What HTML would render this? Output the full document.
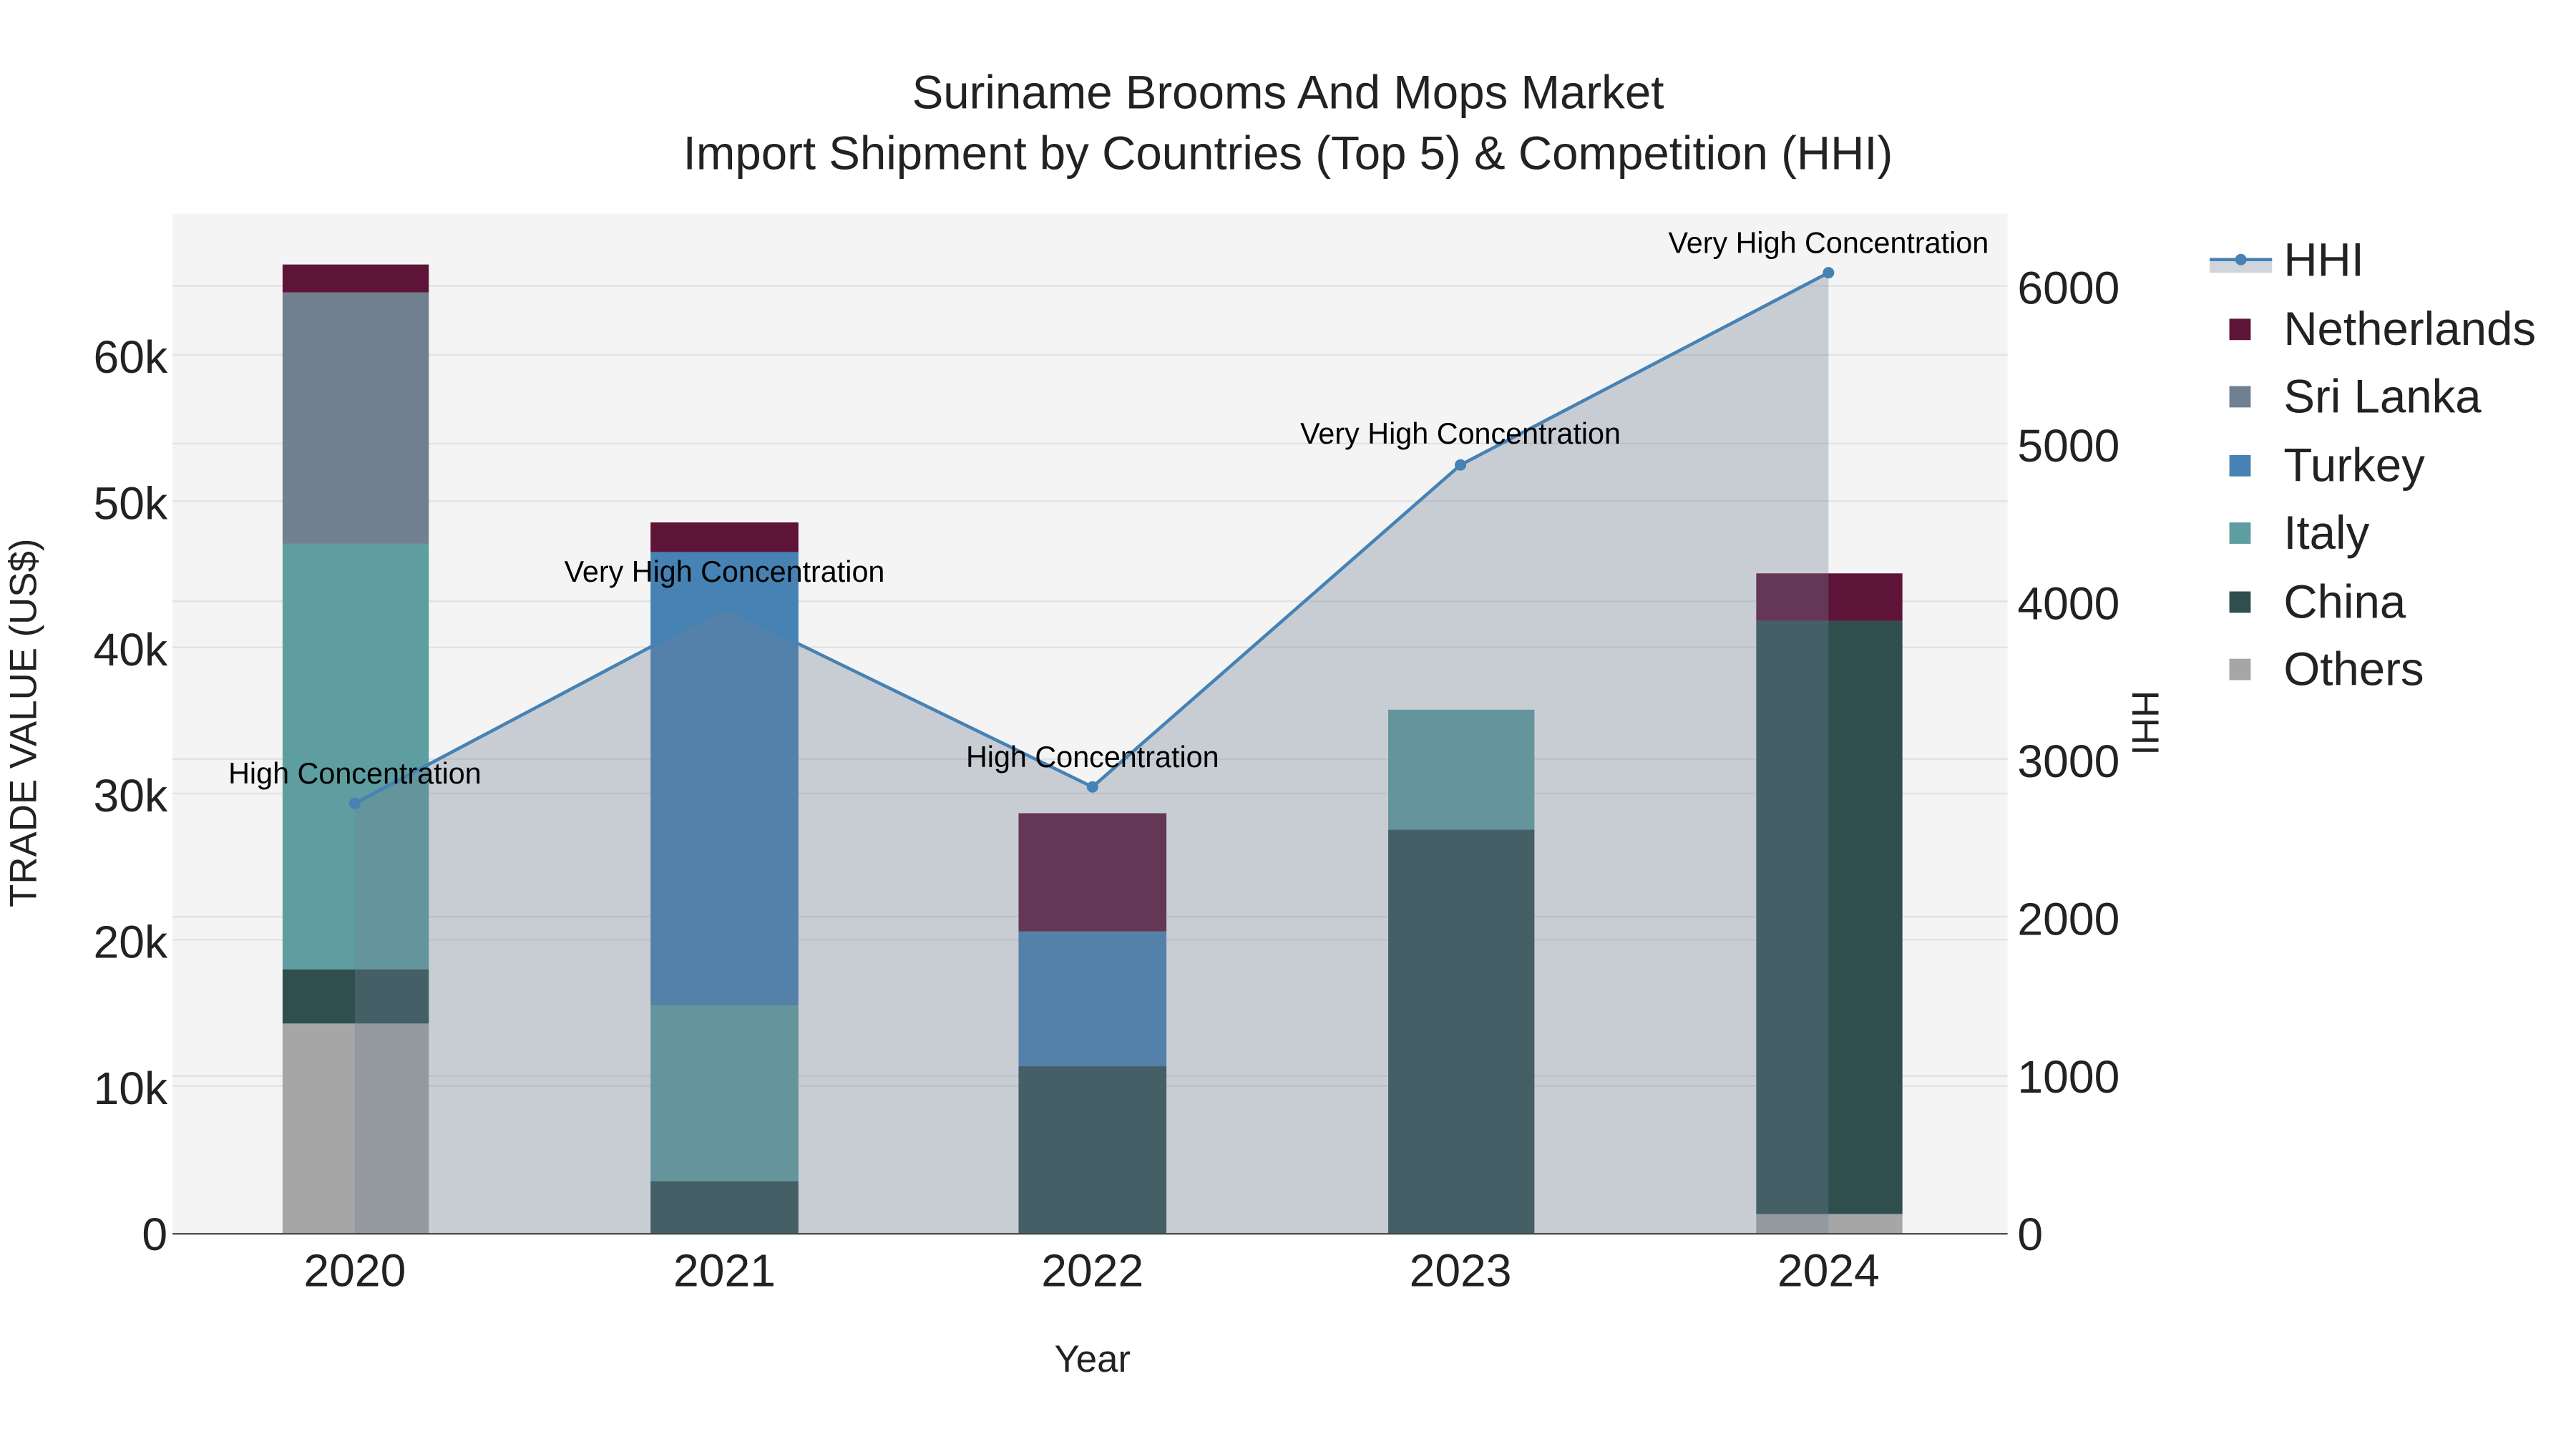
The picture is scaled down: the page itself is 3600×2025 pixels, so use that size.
<!DOCTYPE html>
<html><head><meta charset="utf-8"><style>html,body{margin:0;padding:0;background:#fff}svg{display:block}</style></head>
<body>
<svg width="3600" height="2025" viewBox="0 0 1568 882" preserveAspectRatio="none" xmlns="http://www.w3.org/2000/svg" font-family="Liberation Sans, sans-serif">
<rect width="1568" height="882" fill="#fff"/>
<rect x="105" y="130" width="1117" height="621" fill="#f4f4f4"/>
<g stroke="#e2e2e2" stroke-width="1">
<line x1="105" x2="1222" y1="216" y2="216"/><line x1="105" x2="1222" y1="305" y2="305"/><line x1="105" x2="1222" y1="394" y2="394"/><line x1="105" x2="1222" y1="483" y2="483"/><line x1="105" x2="1222" y1="572" y2="572"/><line x1="105" x2="1222" y1="661" y2="661"/>
<line x1="105" x2="1222" y1="174" y2="174"/><line x1="105" x2="1222" y1="270" y2="270"/><line x1="105" x2="1222" y1="366" y2="366"/><line x1="105" x2="1222" y1="462" y2="462"/><line x1="105" x2="1222" y1="558" y2="558"/><line x1="105" x2="1222" y1="655" y2="655"/>
</g>
<g>
<rect x="172" y="623" width="89" height="128" fill="#a6a6a6"/>
<rect x="172" y="590" width="89" height="33" fill="#2f4f4f"/>
<rect x="172" y="331" width="89" height="259" fill="#5f9ea0"/>
<rect x="172" y="178" width="89" height="153" fill="#708090"/>
<rect x="172" y="161" width="89" height="17" fill="#5e1438"/>
<rect x="396" y="719" width="90" height="32" fill="#2f4f4f"/>
<rect x="396" y="612" width="90" height="107" fill="#5f9ea0"/>
<rect x="396" y="336" width="90" height="276" fill="#4682b4"/>
<rect x="396" y="318" width="90" height="18" fill="#5e1438"/>
<rect x="620" y="649" width="90" height="102" fill="#2f4f4f"/>
<rect x="620" y="567" width="90" height="82" fill="#4682b4"/>
<rect x="620" y="495" width="90" height="72" fill="#5e1438"/>
<rect x="845" y="505" width="89" height="246" fill="#2f4f4f"/>
<rect x="845" y="432" width="89" height="73" fill="#5f9ea0"/>
<rect x="1069" y="739" width="89" height="12" fill="#a6a6a6"/>
<rect x="1069" y="378" width="89" height="361" fill="#2f4f4f"/>
<rect x="1069" y="349" width="89" height="29" fill="#5e1438"/>
</g>
<polygon points="216,751 216,489 441,370 665,479 889,283 1113,166 1113,751" fill="rgba(112,128,150,0.33)"/>
<polyline points="216,489 441,370 665,479 889,283 1113,166" fill="none" stroke="#4682b4" stroke-width="2"/>
<g fill="#4682b4"><circle cx="216" cy="489" r="3.5"/><circle cx="441" cy="370" r="3.5"/><circle cx="665" cy="479" r="3.5"/><circle cx="889" cy="283" r="3.5"/><circle cx="1113" cy="166" r="3.5"/></g>
<line x1="105" x2="1222" y1="751" y2="751" stroke="#444" stroke-width="1"/>
<g font-size="18" fill="#000" text-anchor="middle">
<text x="216" y="477">High Concentration</text>
<text x="441" y="354">Very High Concentration</text>
<text x="665" y="467">High Concentration</text>
<text x="889" y="270">Very High Concentration</text>
<text x="1113" y="154">Very High Concentration</text>
</g>
<g font-size="28.5" fill="#222" text-anchor="middle">
<text x="784" y="66">Suriname Brooms And Mops Market</text>
<text x="784" y="103">Import Shipment by Countries (Top 5) &amp; Competition (HHI)</text>
</g>
<g font-size="28" fill="#222" text-anchor="end">
<text x="102" y="761">0</text><text x="102" y="672">10k</text><text x="102" y="583">20k</text><text x="102" y="494">30k</text><text x="102" y="405">40k</text><text x="102" y="316">50k</text><text x="102" y="227">60k</text>
</g>
<g font-size="28" fill="#222" text-anchor="start">
<text x="1228" y="761">0</text><text x="1228" y="665">1000</text><text x="1228" y="569">2000</text><text x="1228" y="473">3000</text><text x="1228" y="377">4000</text><text x="1228" y="281">5000</text><text x="1228" y="185">6000</text>
</g>
<g font-size="28" fill="#222" text-anchor="middle">
<text x="216" y="783">2020</text><text x="441" y="783">2021</text><text x="665" y="783">2022</text><text x="889" y="783">2023</text><text x="1113" y="783">2024</text>
</g>
<text x="665" y="835" font-size="23" fill="#222" text-anchor="middle">Year</text>
<text transform="translate(22,440) rotate(-90)" font-size="23" fill="#222" text-anchor="middle">TRADE VALUE (US$)</text>
<text transform="translate(1298,440) rotate(90)" font-size="23" fill="#222" text-anchor="middle">HHI</text>
<rect x="1345" y="158" width="38" height="8" fill="rgba(112,128,150,0.33)"/>
<line x1="1345" x2="1383" y1="158" y2="158" stroke="#4682b4" stroke-width="2"/>
<circle cx="1364" cy="158" r="3.5" fill="#4682b4"/>
<rect x="1357" y="194" width="13" height="13" fill="#5e1438"/>
<rect x="1357" y="235" width="13" height="13" fill="#708090"/>
<rect x="1357" y="277" width="13" height="13" fill="#4682b4"/>
<rect x="1357" y="318" width="13" height="13" fill="#5f9ea0"/>
<rect x="1357" y="360" width="13" height="13" fill="#2f4f4f"/>
<rect x="1357" y="401" width="13" height="13" fill="#a6a6a6"/>
<g font-size="28.5" fill="#222">
<text x="1390" y="168">HHI</text><text x="1390" y="210">Netherlands</text><text x="1390" y="251">Sri Lanka</text><text x="1390" y="293">Turkey</text><text x="1390" y="334">Italy</text><text x="1390" y="376">China</text><text x="1390" y="417">Others</text>
</g>
</svg>
</body></html>
